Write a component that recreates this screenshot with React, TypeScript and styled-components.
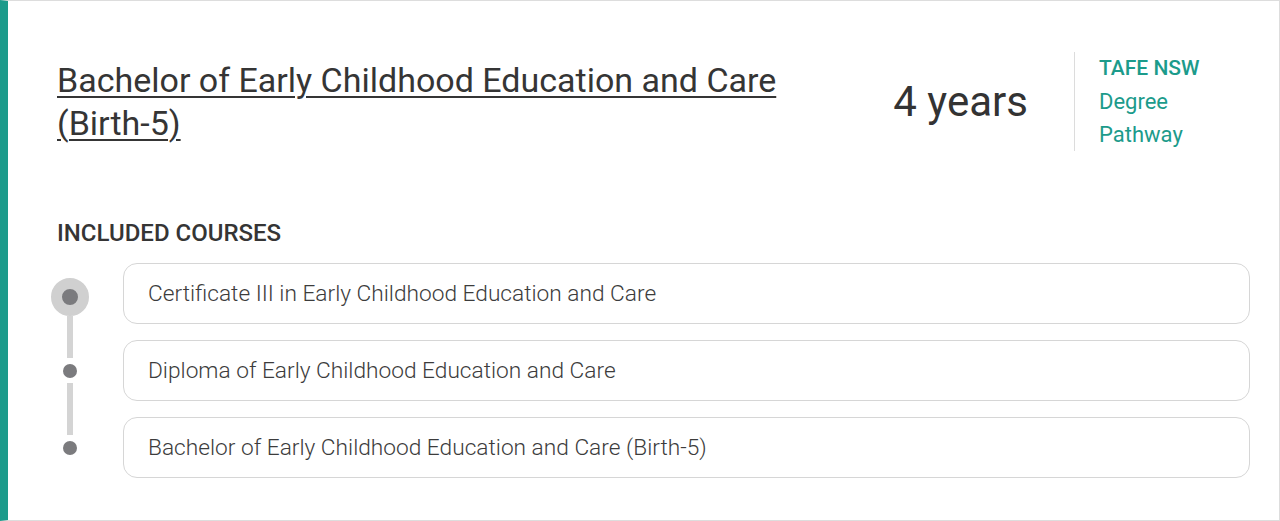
import React from 'react';
import styled, { createGlobalStyle } from 'styled-components';

const GlobalStyle = createGlobalStyle`
  html, body {
    margin: 0;
    padding: 0;
    background: #ffffff;
  }
  body {
    font-family: Roboto, "Liberation Sans", Arial, sans-serif;
    color: #353535;
  }
`;

const courses = [
    'Certificate III in Early Childhood Education and Care',
    'Diploma of Early Childhood Education and Care',
    'Bachelor of Early Childhood Education and Care (Birth-5)',
];

const App: React.FC = () => {
    return (
        <>
            <GlobalStyle />
            <Card>
                <Header>
                    <TitleWrap>
                        <Title href="#">Bachelor of Early Childhood Education and Care (Birth-5)</Title>
                    </TitleWrap>
                    <Duration>4 years</Duration>
                    <Provider>
                        <ProviderName>TAFE NSW</ProviderName>
                        <ProviderLine>Degree</ProviderLine>
                        <ProviderLine>Pathway</ProviderLine>
                    </Provider>
                </Header>

                <SectionHeading>INCLUDED COURSES</SectionHeading>
                <CourseList>
                    {courses.map((course, i) => (
                        <CourseRow key={course}>
                            <Marker>
                                <Segment $hidden={i === 0} $position="top" />
                                <Dot $active={i === 0} />
                                <Segment $hidden={i === courses.length - 1} $position="bottom" $active={i === 0} />
                            </Marker>
                            <CourseBox>{course}</CourseBox>
                        </CourseRow>
                    ))}
                </CourseList>
            </Card>
        </>
    );
};

const Card = styled.div`
  box-sizing: border-box;
  height: 521px;
  border: 1px solid #dddddd;
  border-left: 8px solid #1c9b8b;
  padding: 51px 29px 42px 49px;
  background: #ffffff;
`;

const Header = styled.div`
  display: flex;
  align-items: center;
  padding-right: 21px;
`;

const TitleWrap = styled.div`
  flex: 1;
  padding-right: 80px;
`;

const Title = styled.a`
  font-size: 34px;
  line-height: 43px;
  color: #353535;
  text-decoration: underline;
  text-decoration-thickness: 2px;
  text-underline-offset: 4px;
  display: inline-block;
  max-width: 730px;
`;

const Duration = styled.div`
  font-size: 42px;
  line-height: 48px;
  color: #333333;
  margin-right: 46px;
  white-space: nowrap;
`;

const Provider = styled.div`
  width: 130px;
  border-left: 1px solid #dcdcdc;
  padding-left: 24px;
  display: flex;
  flex-direction: column;
`;

const ProviderName = styled.div`
  font-size: 21px;
  line-height: 33px;
  font-weight: 500;
  color: #1c9b8b;
`;

const ProviderLine = styled.div`
  font-size: 22px;
  line-height: 33px;
  color: #1c9b8b;
`;

const SectionHeading = styled.h2`
  margin: 67px 0 7px;
  font-size: 24px;
  line-height: 30px;
  font-weight: 500;
  color: #353535;
`;

const CourseList = styled.div`
  display: flex;
  flex-direction: column;
`;

const CourseRow = styled.div`
  display: flex;
  align-items: stretch;
  gap: 40px;
`;

const Marker = styled.div`
  width: 26px;
  flex-shrink: 0;
  display: flex;
  flex-direction: column;
  align-items: center;
`;

const Segment = styled.div<{ $hidden?: boolean; $position: 'top' | 'bottom'; $active?: boolean }>`
  flex: 1;
  width: 6px;
  background: ${(props) => (props.$hidden ? 'transparent' : '#d4d4d4')};
  margin-bottom: ${(props) => (props.$position === 'top' ? '6px' : '0')};
  margin-top: ${(props) => (props.$position === 'bottom' && !props.$active ? '5px' : '0')};
`;

const Dot = styled.div<{ $active?: boolean }>`
  flex-shrink: 0;
  width: ${(props) => (props.$active ? '16px' : '14px')};
  height: ${(props) => (props.$active ? '16px' : '14px')};
  border-radius: 50%;
  background: #7b7b7e;
  border: ${(props) => (props.$active ? '11px solid #d0d0d0' : 'none')};
  margin: ${(props) => (props.$active ? '0 -11px' : '0')};
`;

const CourseBox = styled.div`
  flex: 1;
  box-sizing: border-box;
  height: 61px;
  margin: 8px 0;
  border: 1px solid #d6d6d6;
  border-radius: 14px;
  padding: 0 24px;
  display: flex;
  align-items: center;
  font-size: 22.7px;
  font-weight: 300;
  color: #3c3c3c;
`;

export default App;
